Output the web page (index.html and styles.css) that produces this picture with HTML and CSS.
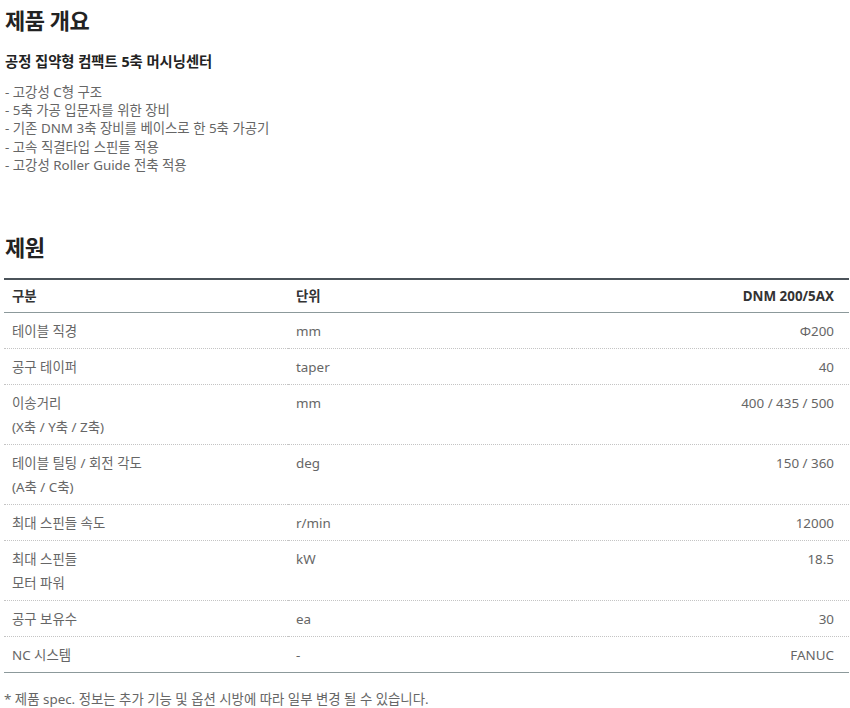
FILE: index.html
```html
<!DOCTYPE html>
<html lang="ko">
<head>
<meta charset="utf-8">
<title>제품 개요</title>
<link rel="stylesheet" href="styles.css">
</head>
<body>
<main class="page">
  <section class="overview">
    <h2 class="title">제품 개요</h2>
    <h3 class="subtitle">공정 집약형 컴팩트 5축 머시닝센터</h3>
    <ul class="features">
      <li>- 고강성 C형 구조</li>
      <li>- 5축 가공 입문자를 위한 장비</li>
      <li>- 기존 DNM 3축 장비를 베이스로 한 5축 가공기</li>
      <li>- 고속 직결타입 스핀들 적용</li>
      <li>- 고강성 Roller Guide 전축 적용</li>
    </ul>
  </section>
  <section class="spec">
    <h2 class="title title-spec">제원</h2>
    <table class="spec-table">
      <colgroup><col class="c1"><col class="c2"><col class="c3"></colgroup>
      <thead>
        <tr><th>구분</th><th>단위</th><th class="val">DNM 200/5AX</th></tr>
      </thead>
      <tbody>
        <tr><td>테이블 직경</td><td>mm</td><td class="val">Φ200</td></tr>
        <tr><td>공구 테이퍼</td><td>taper</td><td class="val">40</td></tr>
        <tr><td>이송거리<br>(X축 / Y축 / Z축)</td><td>mm</td><td class="val">400 / 435 / 500</td></tr>
        <tr><td>테이블 틸팅 / 회전 각도<br>(A축 / C축)</td><td>deg</td><td class="val">150 / 360</td></tr>
        <tr><td>최대 스핀들 속도</td><td>r/min</td><td class="val">12000</td></tr>
        <tr><td>최대 스핀들<br>모터 파워</td><td>kW</td><td class="val">18.5</td></tr>
        <tr><td>공구 보유수</td><td>ea</td><td class="val">30</td></tr>
        <tr><td>NC 시스템</td><td>-</td><td class="val">FANUC</td></tr>
      </tbody>
    </table>
  </section>
  <p class="note">* 제품 spec. 정보는 추가 기능 및 옵션 시방에 따라 일부 변경 될 수 있습니다.</p>
</main>
</body>
</html>
```

FILE: styles.css
```css
html, body {
  margin: 0;
  padding: 0;
  background: #fff;
}
body {
  font-family: "Noto Sans", "Noto Sans CJK KR", sans-serif;
  color: #666;
  font-size: 13.4px;
}
.page {
  padding: 4px 1px 0 4px;
}
.title {
  margin: 0;
  font-size: 22px;
  line-height: 32px;
  font-weight: 700;
  color: #222;
  padding-left: 1px;
  letter-spacing: -0.5px;
}
.subtitle {
  margin: 16px 0 0;
  font-size: 14.3px;
  line-height: 20px;
  font-weight: 700;
  color: #222;
  padding-left: 1px;
}
.features {
  list-style: none;
  margin: 11px 0 0;
  padding: 0 0 0 1px;
  line-height: 18.2px;
}
.title-spec {
  margin-top: 57px;
}
.spec-table {
  margin-top: 15px;
  width: 845px;
  border-collapse: collapse;
  table-layout: fixed;
  border-top: 2px solid #4b535a;
  border-bottom: 1px solid #8c999b;
}
.c1 { width: 284px; }
.c2 { width: 284px; }
.spec-table th {
  text-align: left;
  font-weight: 700;
  color: #333;
  line-height: 24px;
  padding: 4px 8px;
  border-bottom: 1px solid #8c999b;
}
.spec-table td {
  line-height: 24px;
  padding: 6px 8px 5px;
  vertical-align: top;
  border-bottom: 1px dotted #c4c4c4;
}
.spec-table tbody tr:last-child td {
  border-bottom: 1px solid #8c999b;
}
.spec-table .val {
  text-align: right;
  padding-right: 15px;
}
.note {
  margin: 17px 0 0;
  line-height: 18px;
}
```
